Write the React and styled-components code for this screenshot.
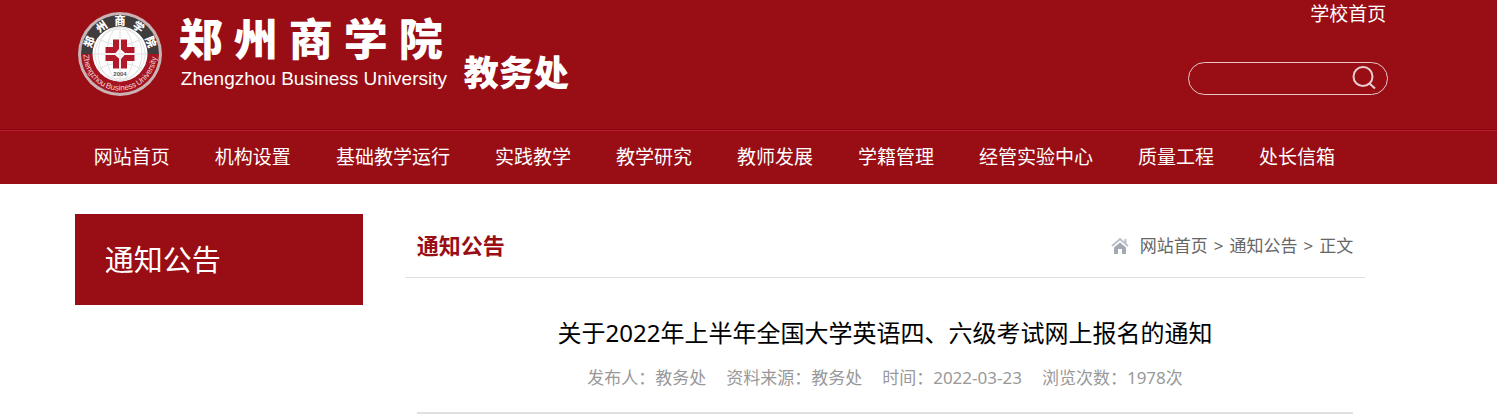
import React, { useState } from "react";
import styled, { createGlobalStyle } from "styled-components";

const navList = [
  "网站首页",
  "机构设置",
  "基础教学运行",
  "实践教学",
  "教学研究",
  "教师发展",
  "学籍管理",
  "经管实验中心",
  "质量工程",
  "处长信箱",
];

const article = {
  title: "关于2022年上半年全国大学英语四、六级考试网上报名的通知",
  author: "教务处",
  source: "教务处",
  date: "2022-03-23",
  views: 1978,
};

const GlobalStyle = createGlobalStyle`
  * {
    box-sizing: border-box;
  }
  body {
    margin: 0;
    background: #fff;
    font-family: "Noto Sans", "Noto Sans CJK SC", sans-serif;
    font-size: 17px;
  }
  h1, h2, p, ul {
    margin: 0;
    padding: 0;
    font-weight: 400;
  }
  a {
    color: inherit;
    text-decoration: none;
  }
`;

const Header = styled.header`
  background: #990d15;
  color: #fff;
`;

const Wrap = styled.div`
  width: 90%;
  margin: 0 auto;
`;

const Top = styled(Wrap)`
  display: flex;
  justify-content: space-between;
  height: 129px;
  padding-right: 34px;
`;

const Brand = styled.a`
  display: flex;
  align-items: flex-start;
  padding: 11px 0 0 3px;
`;

const SchoolName = styled.div`
  width: 264px;
  margin: 0 21px 0 17px;
`;

const Chinese = styled.div`
  display: flex;
  justify-content: space-between;
  font-family: "Noto Sans CJK SC", sans-serif;
  font-size: 44px;
  font-weight: 900;
  line-height: 52px;
`;

const English = styled.div`
  padding-left: 2px;
  font-family: "Liberation Sans", Arial, sans-serif;
  font-size: 19px;
  line-height: 32px;
  white-space: nowrap;
`;

const Department = styled.div`
  padding-top: 40px;
  font-size: 35px;
  font-weight: 900;
  line-height: 44px;
`;

const Tools = styled.div`
  display: flex;
  flex-direction: column;
  align-items: flex-end;
`;

const SchoolLink = styled.a`
  padding-right: 2px;
  font-size: 19px;
  line-height: 28px;
`;

const Search = styled.form`
  display: flex;
  align-items: center;
  width: 200px;
  height: 33px;
  margin-top: 34px;
  padding: 0 11px 0 16px;
  border: 1px solid #e6c8ca;
  border-radius: 17px;
  input {
    flex: 1;
    min-width: 0;
    border: 0;
    outline: none;
    background: none;
    color: #fff;
    font: inherit;
  }
  button {
    display: flex;
    padding: 0 0 2px;
    border: 0;
    background: none;
    cursor: pointer;
  }
`;

const Nav = styled.nav`
  border-top: 1px solid #8a0610;
  ul {
    display: flex;
    gap: 45px;
    padding-left: 19px;
    list-style: none;
  }
`;

const NavLine = styled.div`
  border-top: 1px solid #b91c2d;
`;

const NavItem = styled.li`
  font-size: 19px;
  line-height: 53px;
  white-space: nowrap;
`;

const Main = styled(Wrap)`
  display: flex;
  align-items: flex-start;
  gap: 42px;
  padding: 30px 57px 0 0;
`;

const Side = styled.aside`
  flex: 0 0 288px;
  padding: 0 30px;
  background: #990d15;
  color: #fff;
  font-size: 29px;
  line-height: 91px;
`;

const Content = styled.main`
  flex: 1;
`;

const Bar = styled.div`
  display: flex;
  justify-content: space-between;
  padding: 0 12px;
  border-bottom: 1px solid #dfdfe3;
  line-height: 63px;
  h2 {
    color: #990d15;
    font-size: 22px;
    font-weight: 700;
  }
`;

const Crumbs = styled.nav`
  display: flex;
  align-items: center;
  gap: 6px;
  color: #666;
  svg {
    margin-right: 5px;
  }
`;

const Article = styled.article`
  margin: 0 12px;
  padding: 35px 0 20px;
  border-bottom: 2px solid #e0e0e0;
  text-align: center;
  h1 {
    color: #000;
    font-size: 24px;
    line-height: 40px;
  }
`;

const Meta = styled.div`
  display: flex;
  justify-content: center;
  gap: 20px;
  padding-top: 10px;
  color: #999;
  line-height: 29px;
`;

function Seal() {
  return (
    <svg width="84" height="86" viewBox="0 0 84 86" aria-hidden="true">
      <defs>
        <path id="seal-top" d="M13 43a29 29 0 0 1 58 0" />
        <path id="seal-bottom" d="M5.5 43a36.5 36.5 0 0 0 73 0" />
      </defs>
      <circle cx="42" cy="43" r="42" fill="#c9b3b3" />
      <path d="M3 43a39 39 0 0 1 78 0z" fill="#403b3c" />
      <path d="M3 43a39 39 0 0 0 78 0z" fill="#a31420" />
      <circle cx="42" cy="43" r="27.5" fill="#fff" />
      <g fill="none" stroke="#e2e2e2" strokeWidth="1">
        <circle cx="42" cy="43" r="25" />
        <ellipse cx="42" cy="43" rx="13" ry="27" />
        <ellipse cx="42" cy="43" rx="22" ry="27" />
        <path d="M15 43h54M42 16v54M20 28q22 12 44 0M20 58q22-12 44 0" />
      </g>
      <g fill="#b11a2a">
        {[0, 90, 180, 270].map((deg) => (
          <path
            key={deg}
            transform={`rotate(${deg} 42 43)`}
            d="M35 28.500h6v9.500l-3.500 4h-10v-6h7.500z"
          />
        ))}
      </g>
      {["郑", "州", "商", "学", "院"].map((char, i) => (
        <text
          key={char}
          fill="#fff"
          fontFamily="Noto Sans CJK SC, sans-serif"
          fontSize="11"
          fontWeight="900"
          textAnchor="middle"
        >
          <textPath href="#seal-top" startOffset={`${12 + i * 19}%`}>
            {char}
          </textPath>
        </text>
      ))}
      {[
        ["Zhengzhou", "18%"],
        ["Business", "51%"],
        ["University", "82%"],
      ].map(([word, offset]) => (
        <text
          key={word}
          fill="#f0dada"
          fontFamily="Liberation Sans, sans-serif"
          fontSize="8"
          textAnchor="middle"
        >
          <textPath href="#seal-bottom" startOffset={offset}>
            {word}
          </textPath>
        </text>
      ))}
      <text
        x="42"
        y="65"
        fill="#555"
        fontFamily="Liberation Sans, sans-serif"
        fontSize="6"
        fontWeight="700"
        textAnchor="middle"
      >
        2004
      </text>
    </svg>
  );
}

function SearchIcon() {
  return (
    <svg width="24" height="24" viewBox="0 0 24 24" fill="none" stroke="#e8cfd0">
      <circle cx="11" cy="10.500" r="9.500" strokeWidth="2" />
      <path d="M17 17l6 5.500" strokeWidth="2" />
    </svg>
  );
}

function HomeIcon() {
  return (
    <svg width="18" height="17" viewBox="0 0 18 17" aria-hidden="true">
      <path
        d="M1 9L9 2l8 7M14.500 2v4"
        fill="none"
        stroke="#bcc0ca"
        strokeWidth="2"
      />
      <path d="M3 10.500L9 5.500l6 5V17h-4v-5H7v5H3z" fill="#a3a8b4" />
    </svg>
  );
}

function App() {
  const [keyword, setKeyword] = useState("");

  return (
    <>
      <GlobalStyle />
      <Header>
        <Top>
          <Brand href="#">
            <Seal />
            <SchoolName>
              <Chinese>
                <span>郑</span>
                <span>州</span>
                <span>商</span>
                <span>学</span>
                <span>院</span>
              </Chinese>
              <English>Zhengzhou Business University</English>
            </SchoolName>
            <Department>教务处</Department>
          </Brand>
          <Tools>
            <SchoolLink href="#">学校首页</SchoolLink>
            <Search onSubmit={(e) => e.preventDefault()}>
              <input
                type="text"
                aria-label="搜索"
                value={keyword}
                onChange={(e) => setKeyword(e.target.value)}
              />
              <button type="submit" aria-label="搜索">
                <SearchIcon />
              </button>
            </Search>
          </Tools>
        </Top>
        <Nav>
          <NavLine />
          <Wrap>
            <ul>
              {navList.map((item) => (
                <NavItem key={item}>
                  <a href="#">{item}</a>
                </NavItem>
              ))}
            </ul>
          </Wrap>
        </Nav>
      </Header>
      <Main>
        <Side>通知公告</Side>
        <Content>
          <Bar>
            <h2>通知公告</h2>
            <Crumbs>
              <HomeIcon />
              <a href="#">网站首页</a>
              <span>&gt;</span>
              <a href="#">通知公告</a>
              <span>&gt;</span>
              <span>正文</span>
            </Crumbs>
          </Bar>
          <Article>
            <h1>{article.title}</h1>
            <Meta>
              <span>发布人：{article.author}</span>
              <span>资料来源：{article.source}</span>
              <span>时间：{article.date}</span>
              <span>浏览次数：{article.views}次</span>
            </Meta>
          </Article>
        </Content>
      </Main>
    </>
  );
}

export default App;
